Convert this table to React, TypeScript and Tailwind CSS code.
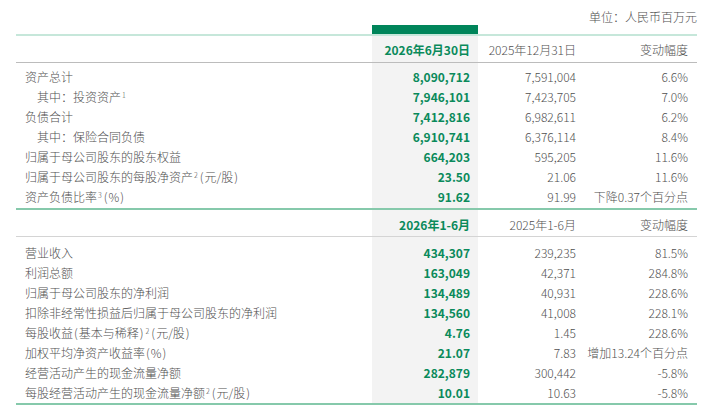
import React from "react";

type Row = {
  label: React.ReactNode;
  indent?: boolean;
  a: string;
  b: string;
  c: string;
};

const Sup = ({ n }: { n: string }) => (
  <span className="relative top-[-4px] text-[7px] leading-none ml-[1px] mr-[1px]">{n}</span>
);

const P = ({ t }: { t: string }) => (
  <span>
    <span className="mx-[1px]">(</span>
    {t}
    <span className="mx-[1px]">)</span>
  </span>
);

const section1: Row[] = [
  { label: "资产总计", a: "8,090,712", b: "7,591,004", c: "6.6%" },
  {
    label: (
      <>
        其中：投资资产
        <Sup n="1" />
      </>
    ),
    indent: true,
    a: "7,946,101",
    b: "7,423,705",
    c: "7.0%",
  },
  { label: "负债合计", a: "7,412,816", b: "6,982,611", c: "6.2%" },
  { label: "其中：保险合同负债", indent: true, a: "6,910,741", b: "6,376,114", c: "8.4%" },
  { label: "归属于母公司股东的股东权益", a: "664,203", b: "595,205", c: "11.6%" },
  {
    label: (
      <>
        归属于母公司股东的每股净资产
        <Sup n="2" />
        <P t="元/股" />
      </>
    ),
    a: "23.50",
    b: "21.06",
    c: "11.6%",
  },
  {
    label: (
      <>
        资产负债比率
        <Sup n="3" />
        <P t="%" />
      </>
    ),
    a: "91.62",
    b: "91.99",
    c: "下降0.37个百分点",
  },
];

const section2: Row[] = [
  { label: "营业收入", a: "434,307", b: "239,235", c: "81.5%" },
  { label: "利润总额", a: "163,049", b: "42,371", c: "284.8%" },
  { label: "归属于母公司股东的净利润", a: "134,489", b: "40,931", c: "228.6%" },
  {
    label: "扣除非经常性损益后归属于母公司股东的净利润",
    a: "134,560",
    b: "41,008",
    c: "228.1%",
  },
  {
    label: (
      <>
        每股收益
        <P t="基本与稀释" />
        <Sup n="2" />
        <P t="元/股" />
      </>
    ),
    a: "4.76",
    b: "1.45",
    c: "228.6%",
  },
  {
    label: (
      <>
        加权平均净资产收益率
        <P t="%" />
      </>
    ),
    a: "21.07",
    b: "7.83",
    c: "增加13.24个百分点",
  },
  { label: "经营活动产生的现金流量净额", a: "282,879", b: "300,442", c: "-5.8%" },
  {
    label: (
      <>
        每股经营活动产生的现金流量净额
        <Sup n="2" />
        <P t="元/股" />
      </>
    ),
    a: "10.01",
    b: "10.63",
    c: "-5.8%",
  },
];

const GRID = "grid grid-cols-[356px_106px_106px_113px]";

const Spacer = ({ h }: { h: string }) => (
  <div className={GRID}>
    <div className={h} />
    <div className={`${h} bg-[#f3f3f3]`} />
    <div className={h} />
    <div className={h} />
  </div>
);

const DataRow = ({ r }: { r: Row }) => (
  <div className={`${GRID} h-[20px] leading-[20px] text-[12px]`}>
    <div className={`${r.indent ? "pl-[21px]" : "pl-[9px]"} font-light text-[#4f4f4f] whitespace-nowrap`}>
      {r.label}
    </div>
    <div className="bg-[#f3f3f3] text-right pr-[8px] font-bold text-[#0a8a5b]">{r.a}</div>
    <div className="text-right pr-[8px] font-light text-[#4f4f4f]">{r.b}</div>
    <div className="text-right pr-[9px] font-light text-[#4f4f4f] whitespace-nowrap">{r.c}</div>
  </div>
);

const Header = ({ a, b, pt }: { a: string; b: string; pt: string }) => (
  <div className={`${GRID} h-[26px] text-[12px] leading-[20px]`}>
    <div />
    <div className={`bg-[#f3f3f3] text-right pr-[8px] font-bold text-[#0a8a5b] ${pt}`}>{a}</div>
    <div className={`text-right pr-[8px] font-light text-[#4f4f4f] ${pt}`}>{b}</div>
    <div className={`text-right pr-[9px] font-light text-[#4f4f4f] ${pt}`}>变动幅度</div>
  </div>
);

export default function App() {
  return (
    <div className="w-[714px] h-[409px] bg-white overflow-hidden font-['Noto_Sans_CJK_SC',_'Noto_Sans',_sans-serif]">
      <div className="h-[25px] pt-[9px] pr-[17px] text-right text-[12px] leading-[16px] font-light text-[#4f4f4f]">
        单位：人民币百万元
      </div>
      <div className="ml-[16px] w-[681px]">
        <div className={GRID}>
          <div className="h-[9px]" />
          <div className="h-[9px] bg-[#00855a]" />
          <div />
          <div />
        </div>
        <div className="h-[2px] bg-[#c6e7da]" />
        <Header a="2026年6月30日" b="2025年12月31日" pt="pt-[4px]" />
        <div className="h-[1px] bg-[#bcbcbc]" />
        <Spacer h="h-[4px]" />
        {section1.map((r, i) => (
          <DataRow key={i} r={r} />
        ))}
        <Spacer h="h-[1px]" />
        <div className="h-[2px] bg-[#86c9ab]" />
        <Header a="2026年1-6月" b="2025年1-6月" pt="pt-[5px]" />
        <div className="h-[1px] bg-[#d4d4d4]" />
        <Spacer h="h-[6px]" />
        {section2.map((r, i) => (
          <DataRow key={i} r={r} />
        ))}
        <div className="h-[2px] bg-[#86c9ab]" />
      </div>
    </div>
  );
}
